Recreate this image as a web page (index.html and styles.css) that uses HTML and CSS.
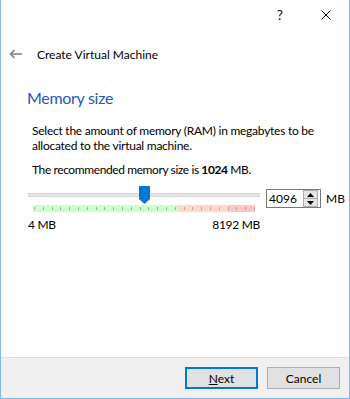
FILE: index.html
```html
<!DOCTYPE html>
<html lang="en">
<head>
<meta charset="UTF-8">
<title>Create Virtual Machine</title>
<link rel="stylesheet" href="styles.css">
</head>
<body>

<div class="window">
  <div class="titlebar">
    <span class="cap-btn help">?</span>
    <span class="cap-btn close">
      <svg width="10" height="10" viewBox="0 0 10 10"><path d="M0.5 0.5 L9.5 9.5 M9.5 0.5 L0.5 9.5" stroke="#000" stroke-width="1" fill="none"/></svg>
    </span>
  </div>

  <div class="nav">
    <svg class="back" width="13" height="10" viewBox="0 0 13 10"><path d="M13 5 H1.5 M5.5 1 L1.5 5 L5.5 9" stroke="#808080" stroke-width="1.6" fill="none"/></svg>
    <span class="nav-title">Create Virtual Machine</span>
  </div>

  <div class="content">
    <h2>Memory size</h2>
    <p class="desc">Select the amount of memory (RAM) in megabytes to be<br>allocated to the virtual machine.</p>
    <p class="recommend">The recommended memory size is <b>1024</b> MB.</p>

    <div class="slider-row">
      <div class="slider">
        <div class="track"></div>
        <div class="scale">
          <div class="zone green" style="width: 144px"></div>
          <div class="zone orange" style="width: 51px"></div>
          <div class="zone red" style="width: 27px"></div>
        </div>
        <svg class="thumb" width="11" height="18" viewBox="0 0 11 18"><polygon points="0,0 11,0 11,13 5.5,18 0,13" fill="#0078d7"/></svg>
      </div>
      <div class="spinbox">
        <span class="spin-value">4096</span>
        <div class="spin-btns">
          <span class="spin-up"><svg width="7" height="4" viewBox="0 0 7 4"><polygon points="3.5,0 7,4 0,4" fill="#000"/></svg></span>
          <span class="spin-down"><svg width="7" height="4" viewBox="0 0 7 4"><polygon points="0,0 7,0 3.5,4" fill="#000"/></svg></span>
        </div>
      </div>
      <span class="unit">MB</span>
    </div>
    <div class="range-labels">
      <span>4 MB</span>
      <span>8192 MB</span>
    </div>
  </div>

  <div class="footer">
    <button class="btn primary"><u>N</u>ext</button>
    <button class="btn">Cancel</button>
  </div>
</div>

</body>
</html>
```

FILE: styles.css
```css
body {
  margin: 0;
  font-family: Lato, 'Liberation Sans', sans-serif;
  font-size: 12px;
  color: #000;
  background: #fff;
}

.window {
  width: 350px;
  height: 399px;
  box-sizing: border-box;
  border: 1px solid #84b7ee;
  border-top: none;
  display: flex;
  flex-direction: column;
  background: #fff;
}

/* Заголовок окна */
.titlebar {
  height: 30px;
  display: flex;
  justify-content: flex-end;
}
.cap-btn {
  width: 46px;
  display: flex;
  justify-content: center;
  align-items: center;
}
.help { font-size: 13px; }

.nav {
  height: 48px;
  display: flex;
  align-items: center;
}
.back { margin-left: 8px; }
.nav-title {
  margin-left: 15px;
  font-size: 12px;
}

/* Контент */
.content {
  padding-left: 26px;
  padding-top: 10px;
}
.content h2 {
  margin: 0;
  font-size: 16px;
  line-height: 20px;
  font-weight: normal;
  letter-spacing: -0.3px;
  color: #1a5cb6;
}
.desc {
  margin: 15px 0 0 5px;
  line-height: 15px;
  letter-spacing: -0.25px;
}
.recommend {
  margin: 9px 0 0 5px;
  line-height: 15px;
  letter-spacing: -0.4px;
}

.slider-row {
  display: flex;
  align-items: flex-start;
  margin-top: 9px;
  margin-left: 1px;
}
.slider {
  position: relative;
  width: 232px;
  height: 26px;
}
.track {
  margin-top: 7px;
  height: 2px;
  background: #e7e7e7;
  border: 1px solid #d6d6d6;
}
.scale {
  display: flex;
  margin: 8px 0 0 5px;
  width: 222px;
  height: 7px;
  position: relative;
}
.scale::after {
  content: "";
  position: absolute;
  left: 1px; right: 0;
  top: 2px; height: 3px;
  background: repeating-linear-gradient(90deg, #a8a8a8 0, #a8a8a8 1px, transparent 1px, transparent 8.8px);
}
.zone { height: 100%; }
.green { background: #ccffcc; }
.orange { background: #ffd8c6; }
.red { background: #ffc6c6; }

.thumb {
  position: absolute;
  left: 111px;
  top: 0;
}

.spinbox {
  margin: 3px 0 0 6px;
  width: 55px;
  height: 19px;
  box-sizing: border-box;
  border: 1px solid #7a7a7a;
  display: flex;
  align-items: center;
}
.spin-value {
  flex: 1;
  padding-left: 2px;
}
.spin-btns {
  display: flex;
  flex-direction: column;
  margin-right: 2px;
}
.spin-btns span {
  width: 13px;
  height: 7px;
  background: #e5e5e5;
  border: 1px solid #adadad;
  display: flex;
  justify-content: center;
  align-items: center;
}
.spin-btns .spin-down { border-top: none; }
.unit {
  margin: 5px 0 0 5px;
  line-height: 15px;
}

.range-labels {
  width: 232px;
  margin: 5px 0 0 1px;
  display: flex;
  justify-content: space-between;
  line-height: 15px;
  letter-spacing: -0.3px;
}

/* Нижняя панель */
.footer {
  margin-top: auto;
  height: 40px;
  border-top: 1px solid #dfdfdf;
  background: #f0f0f0;
  display: flex;
  justify-content: flex-end;
  align-items: center;
  gap: 9px;
  padding-right: 9px;
}
.btn {
  width: 73px;
  height: 22px;
  box-sizing: border-box;
  background: #e1e1e1;
  border: 1px solid #adadad;
  font-family: inherit;
  font-size: 12px;
  color: #000;
  padding: 0;
}
.btn.primary { border: 2px solid #0078d7; }
```
